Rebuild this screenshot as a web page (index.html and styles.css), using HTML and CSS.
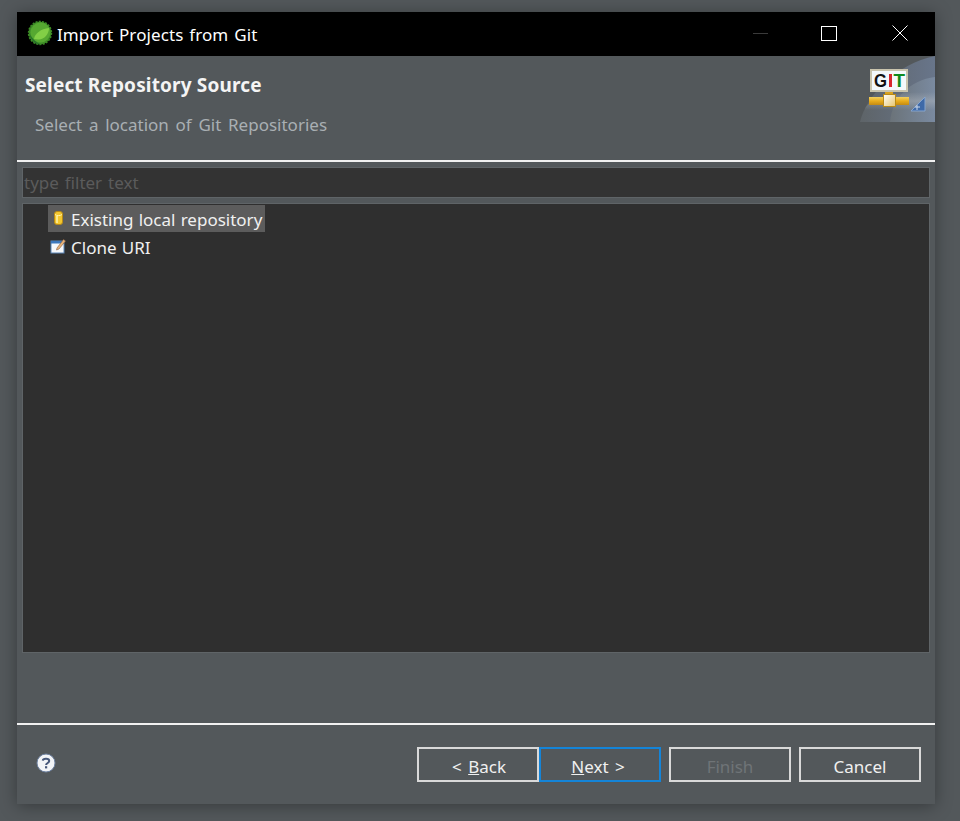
FILE: index.html
```html
<!DOCTYPE html>
<html lang="en">
<head>
<meta charset="utf-8">
<title>Import Projects from Git</title>
<link rel="stylesheet" href="styles.css">
</head>
<body>
<div class="window">
  <div class="titlebar">
    <svg class="app-icon" width="26" height="26" viewBox="0 0 26 26">
      <circle cx="13" cy="13" r="11.2" fill="#3f8f2a" stroke="#3c8a25" stroke-width="2" stroke-dasharray="2 1.2"/>
      <circle cx="13.5" cy="12.5" r="10" fill="#56a831"/>
      <path d="M7 19 C8 13 14 9 22 8 C22 14 17 20 11 19.5 C9.500 19.400 8 19.200 7 19Z" fill="#82cf46"/>
      <path d="M2.500 14 C3.500 20 8.500 24.500 14 24.500 C9 22.500 5.500 19 2.500 14Z" fill="#25702a"/>
    </svg>
    <span class="title">Import Projects from Git</span>
    <div class="controls">
      <span class="ctl"><span class="min"></span></span>
      <span class="ctl"><span class="max"></span></span>
      <span class="ctl">
        <svg width="16" height="16" viewBox="0 0 16 16"><path d="M.5.5L15.5 15.5M15.5.5L.5 15.5" stroke="#fff" stroke-width="1" fill="none"/></svg>
      </span>
    </div>
  </div>

  <div class="header">
    <div class="header-text">
      <h1 class="heading">Select Repository Source</h1>
      <p class="subheading">Select a location of Git Repositories</p>
    </div>
    <svg class="banner" width="75" height="66" viewBox="0 0 75 66">
      <defs>
        <linearGradient id="pipe" x1="0" y1="0" x2="0" y2="1">
          <stop offset="0" stop-color="#f2d060"/><stop offset=".5" stop-color="#e9ac1c"/><stop offset="1" stop-color="#c48a12"/>
        </linearGradient>
        <linearGradient id="valve" x1="0" y1="0" x2="1" y2="1">
          <stop offset="0" stop-color="#fff"/><stop offset="1" stop-color="#e7c46a"/>
        </linearGradient>
        <linearGradient id="swoosh" x1="0" y1="0" x2="1" y2="0">
          <stop offset="0" stop-color="#5e6468"/><stop offset="1" stop-color="#68758a"/>
        </linearGradient>
        <linearGradient id="swoosh2" x1="0" y1="0" x2="1" y2="0">
          <stop offset="0" stop-color="#6b7379"/><stop offset="1" stop-color="#7a8aa0"/>
        </linearGradient>
        <linearGradient id="band" x1="0" y1="0" x2="0" y2="1">
          <stop offset="0" stop-color="#c4c8cc" stop-opacity="0"/><stop offset=".5" stop-color="#c4c8cc" stop-opacity=".35"/><stop offset="1" stop-color="#c4c8cc" stop-opacity="0"/>
        </linearGradient>
      </defs>
      <path d="M0 66 C6 40 36 8 75 0 V66Z" fill="url(#swoosh)"/>
      <path d="M30 66 C32 42 50 24 75 21 V66Z" fill="url(#swoosh2)"/>
      <path d="M5 52 C12 42 30 36 75 36 V54 H5Z" fill="url(#band)"/>
      <rect x="10" y="13" width="38" height="23" fill="#c9c4ad"/>
      <rect x="12" y="15" width="34" height="19" fill="#f3f8fb"/>
      <text x="14" y="31" textLength="13" lengthAdjust="spacingAndGlyphs" class="g">G</text>
      <rect x="29" y="18" width="3" height="13" fill="#d8262c"/>
      <text x="33.500" y="31" textLength="11.500" lengthAdjust="spacingAndGlyphs" class="t">T</text>
      <rect x="25" y="36" width="8" height="4" fill="#d9a11c"/>
      <rect x="9" y="41" width="40" height="8" fill="url(#pipe)"/>
      <rect x="23.500" y="38.500" width="12" height="12" fill="url(#valve)" stroke="#b98a18"/>
      <path d="M65 55 L51 55 L65 41Z" fill="#3f6aa8" stroke="#86a4cc"/>
      <path d="M57 49V54M55 51H60" stroke="#cdd9ea"/>
    </svg>
  </div>
  <div class="rule"></div>

  <div class="body">
    <div class="filter">type filter text</div>
    <div class="tree">
      <div class="row">
        <span class="item selected">
          <svg class="item-icon" width="16" height="16" viewBox="0 0 16 16">
            <rect x="4.500" y="1.500" width="8" height="13" rx="2.500" fill="#f4c72e" stroke="#b88a18"/>
            <path d="M5 4.500 C7 6 10 6 12 4.500" stroke="#fff3b0" fill="none"/>
            <rect x="6" y="6" width="2" height="7" fill="#fbe88a"/>
          </svg>
          <span class="item-label">Existing local repository</span>
        </span>
      </div>
      <div class="row">
        <span class="item">
          <svg class="item-icon" width="16" height="16" viewBox="0 0 16 16">
            <rect x="1" y="3" width="13" height="12" fill="#f6f8fb" stroke="#5b86b8"/>
            <rect x="1" y="3" width="13" height="2.500" fill="#3d78bd"/>
            <path d="M7 10 L13.500 1.500 L15.500 3 L9 11 L6.500 12Z" fill="#e9b57a" stroke="#8c5a3a" stroke-width=".6"/>
          </svg>
          <span class="item-label">Clone URI</span>
        </span>
      </div>
    </div>
  </div>

  <div class="rule"></div>

  <div class="footer">
    <svg class="help" width="20" height="20" viewBox="0 0 20 20">
      <circle cx="10" cy="10" r="9" fill="#f2f4f7" stroke="#6f83a3"/>
      <path d="M6.800 7.600 C7 5.200 13.200 5 13.200 8 C13.200 10 10.100 10 10.100 12" fill="none" stroke="#47587a" stroke-width="2"/>
      <rect x="9" y="13.200" width="2.200" height="2.200" fill="#47587a"/>
    </svg>
    <div class="buttons">
      <div class="group">
        <button class="btn back" type="button">&lt; <u>B</u>ack</button>
        <button class="btn focus" type="button"><u>N</u>ext &gt;</button>
      </div>
      <button class="btn disabled" type="button">Finish</button>
      <button class="btn" type="button">Cancel</button>
    </div>
  </div>
</div>
</body>
</html>
```

FILE: styles.css
```css
* { box-sizing: border-box; }
html, body { height: 100%; }
body {
  margin: 0;
  background: #53585b;
  overflow: hidden;
  font-family: "Noto Sans", "Noto Sans CJK KR", sans-serif;
  font-size: 17px;
  color: #f0f0f0;
}
.window {
  width: 918px;
  height: 792px;
  margin: 12px 0 0 17px;
  background: #53585b;
  display: flex;
  flex-direction: column;
  box-shadow: 0 2px 16px rgba(0, 0, 0, .35);
}
.titlebar {
  height: 44px;
  background: #000;
  display: flex;
  align-items: center;
  padding-left: 10px;
  flex: none;
}
.app-icon { flex: none; margin-bottom: 2px; }
.title {
  margin-left: 4px;
  color: #fff;
  font-size: 17px;
  line-height: 26px;
  padding-top: 2px;
  letter-spacing: .1px;
  word-spacing: 1.3px;
}
.controls { margin-left: auto; display: flex; align-items: center; }
.ctl {
  width: 71px;
  height: 44px;
  display: flex;
  align-items: center;
  justify-content: center;
  padding-bottom: 2px;
}
.min { width: 15px; height: 1px; background: #3a3a3a; margin-left: 6px; }
.max { width: 16px; height: 15px; border: 1px solid #fff; }
.header {
  height: 104px;
  display: flex;
  justify-content: space-between;
  align-items: flex-start;
  flex: none;
}
.header-text { padding: 15px 0 0 8px; }
.heading {
  margin: 0;
  font-size: 19px;
  line-height: 28px;
  font-weight: 700;
  letter-spacing: .15px;
  color: #f4f4f4;
}
.subheading {
  margin: 12px 0 0 10px;
  font-size: 17px;
  line-height: 28px;
  color: #a9afb3;
  word-spacing: 2.300px;
}
.banner { flex: none; }
.rule { height: 2px; background: #f1f1f1; flex: none; }
.body {
  flex: 1;
  display: flex;
  flex-direction: column;
  padding: 5px 5px 0 5px;
  gap: 5px;
}
.filter {
  height: 31px;
  background: #333;
  border: 1px solid #5f6467;
  color: #5b5b5b;
  font-size: 17px;
  line-height: 30px;
  padding-left: 1px;
  flex: none;
  word-spacing: 1.5px;
}
.tree {
  height: 450px;
  background: #2f2f2f;
  border: 1px solid #5f6467;
  padding: 1px 0 0 25px;
}
.row { height: 28px; display: flex; }
.item {
  display: inline-flex;
  align-items: center;
  height: 27px;
  padding: 0 3px 0 0;
  gap: 5px;
  color: #f0f0f0;
  word-spacing: .8px;
}
.item-label { padding-top: 2px; }
.selected { background: #5c5c5c; }
.item-icon { flex: none; margin-left: 2px; margin-top: -2px; }
.footer {
  height: 79px;
  flex: none;
  display: flex;
  justify-content: space-between;
  align-items: flex-start;
  padding: 22px 14px 0 19px;
}
.help { flex: none; margin-top: 6px; }
.buttons { display: flex; gap: 8px; }
.group { display: flex; }
.btn {
  width: 122px;
  height: 35px;
  background: #53585b;
  border: 2px solid #d9d9d9;
  color: #f0f0f0;
  font-family: inherit;
  font-size: 17px;
  line-height: 31px;
  padding: 2px 0 0;
  word-spacing: 2px;
}
.back { padding-left: 2px; }
.focus { border-color: #1484d8; padding-right: 4px; }
.disabled { color: #6f7477; }
.g, .t { font-family: "Liberation Sans", sans-serif; font-weight: 700; font-size: 18.500px; }
.g { fill: #111; }
.t { fill: #0f8a1e; }
```
